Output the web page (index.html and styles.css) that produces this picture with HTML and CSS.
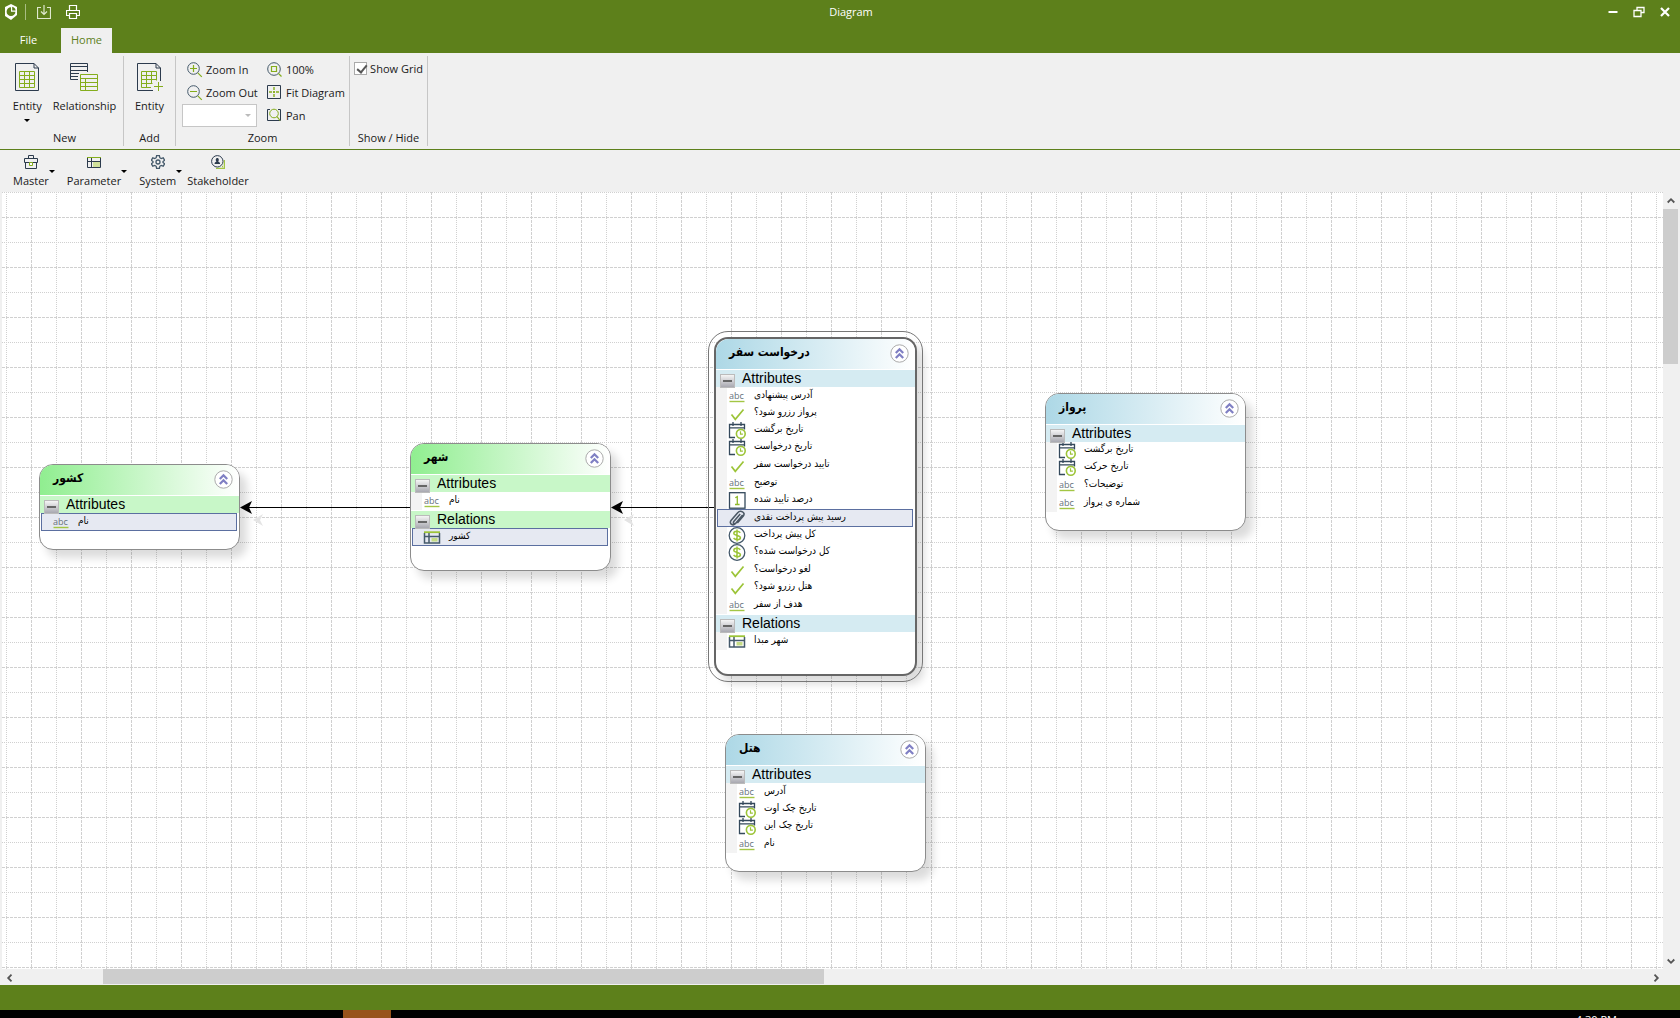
FILE: index.html
```html
<!DOCTYPE html>
<html lang="en">
<head>
  <meta charset="UTF-8">
  <meta name="viewport" content="width=device-width, initial-scale=1.0">
  <title>Diagram</title>
  <link rel="stylesheet" href="styles.css">
</head>
<body>
  <!-- Shared icons -->
  <svg class="sprite" aria-hidden="true">
    <symbol id="collapse" viewBox="0 0 19 19">
      <circle cx="9.5" cy="9.5" r="8.7" fill="#fff" stroke="#aaa" stroke-width="1"/>
      <path d="M5.8 9L9.5 5.3L13.2 9M5.8 14L9.5 10.3L13.2 14" fill="none" stroke="#8080c4" stroke-width="2.3"/>
    </symbol>
    <symbol id="text" viewBox="0 0 18 17">
      <text x="1" y="11" font-family="Open Sans, sans-serif" font-size="9" fill="#66727c">abc</text>
      <path d="M1.5 13.500h15" stroke="#a3c644" stroke-width="1.4"/>
    </symbol>
    <symbol id="check" viewBox="0 0 18 17">
      <path d="M3.5 9.5l3.8 4.8L15.5 4.5" fill="none" stroke="#9cc438" stroke-width="1.7"/>
    </symbol>
    <symbol id="date" viewBox="0 0 18 17">
      <path d="M7 15.5H1.5V2.5h15v5M1.5 5.8h15M5 0v4M13 0v4" fill="none" stroke="#34495b" stroke-width="1.3"/>
      <circle cx="12.8" cy="11.8" r="4.4" fill="#fff" stroke="#9cc438" stroke-width="1.6"/>
      <path d="M12.5 9.3v2.8h2.4" fill="none" stroke="#9cc438" stroke-width="1.2"/>
    </symbol>
    <symbol id="number" viewBox="0 0 18 17">
      <rect x="1.5" y=".7" width="15.5" height="15.5" fill="#fff" stroke="#34495b" stroke-width="1.3"/>
      <path d="M7.3 5.8l2-1.2v7.6M7 12.5h4.6" fill="none" stroke="#8fb82c" stroke-width="1.3"/>
    </symbol>
    <symbol id="file" viewBox="0 0 18 17">
      <path d="M14.7 5L8 13c-3 3.8-7.5.5-4.8-2.8l6.5-7.5c2.6-3 8.4-.4 5.6 3.3l-6 7M12.2 4L5.8 11.5c-1.3 2 1 3 2.2 1.5l6-7.3" fill="none" stroke="#4b5865" stroke-width="1.6"/>
    </symbol>
    <symbol id="money" viewBox="0 0 18 17">
      <circle cx="9" cy="8.5" r="7.8" fill="#fff" stroke="#44596a" stroke-width="1.3"/>
      <path d="M12.3 5.7C10.5 3.5 5.8 3.8 5.8 6.3c0 2.8 6.6 1.4 6.6 4.4 0 2.5-5 2.6-6.8.3M9 2.5v12" fill="none" stroke="#9cc438" stroke-width="1.5"/>
    </symbol>
    <symbol id="relation" viewBox="0 0 18 17">
      <path d="M1.5 4v10h15V4M1.5 7.5h15M6 4v10" fill="none" stroke="#44596a" stroke-width="1.5"/>
      <path d="M1 3.2h16" stroke="#9cc438" stroke-width="1.8"/>
      <path d="M8.5 9h6v3.5h-6z" fill="#c5dc85"/>
    </symbol>
  </svg>

  <header class="titlebar">
    <div class="quick">
      <svg width="14" height="16" viewBox="0 0 14 16" aria-hidden="true">
        <path d="M7 0l6 3v8l-6 5-6-4V3z" fill="#fff"/>
        <path d="M7 3.3a4.4 4.4 0 1 0 4.4 4.4H7z" fill="#5d801b"/>
        <path d="M8.2 2.8v3.8h3.4C11.4 4.5 10 3 8.2 2.8z" fill="#5d801b"/>
      </svg>
      <span class="divider"></span>
      <button aria-label="Save">
        <svg width="14" height="14" viewBox="0 0 14 14"><path d="M4 2.5H.5v11h13v-11H10M7 0v9M4 6.500l3 3 3-3" fill="none" stroke="#dfe8cf" stroke-width="1.2"/></svg>
      </button>
      <button aria-label="Print">
        <svg width="14" height="14" viewBox="0 0 14 14"><path d="M3.500 5V.5h7V5M3.500 10.500h-3V5.500h13v5h-3M3.500 8.500h7v5h-7z" fill="none" stroke="#fff" stroke-width="1.2"/></svg>
      </button>
    </div>
    <h1>Diagram</h1>
    <div class="window-buttons">
      <button aria-label="Minimize"><svg width="12" height="12" viewBox="0 0 12 12"><path d="M1.500 6h9" stroke="#fff" stroke-width="2"/></svg></button>
      <button aria-label="Restore"><svg width="12" height="12" viewBox="0 0 12 12"><path d="M1 4.500h7v6H1zM4 4V1.500h7v5H8.500" fill="none" stroke="#fff" stroke-width="1.300"/></svg></button>
      <button aria-label="Close"><svg width="12" height="12" viewBox="0 0 12 12"><path d="M2 2l8 8M10 2l-8 8" stroke="#fff" stroke-width="2.200"/></svg></button>
    </div>
  </header>

  <nav class="tabs">
    <a href="#file">File</a>
    <a href="#home" class="active">Home</a>
  </nav>

  <section class="ribbon">
    <div class="group new-group">
      <div class="group-body">
        <button class="large">
          <svg width="24" height="28" viewBox="0 0 24 28">
            <path d="M.5.5h18.500l4.500 4.500v22.500H.5zM19 .5v4.500h4.500" fill="none" stroke="#2c3b4d"/>
            <path d="M4.500 8.500h15v16h-15zM4.500 12.500h15M4.500 16.500h15M4.500 20.500h15M9.500 8.500v16M14.500 8.500v16" fill="none" stroke="#84ad1c"/>
          </svg>
          <span>Entity</span>
          <i class="caret"></i>
        </button>
        <button class="large">
          <svg width="28" height="28" viewBox="0 0 28 28">
            <path d="M8 16.500H.5V.5h17V9M.5 3.500h17M.5 7.500h17M.5 10.500H9M.5 13.500H8" fill="none" stroke="#2c3b4d"/>
            <path d="M10.500 11.500h17v16h-17zM10.500 15.500h17M10.500 19.500h17M10.500 23.500h17M15.500 15.500v12" fill="none" stroke="#84ad1c"/>
          </svg>
          <span>Relationship</span>
        </button>
      </div>
      <div class="group-title">New</div>
    </div>
    <div class="group add-group">
      <div class="group-body">
        <button class="large">
          <svg width="26" height="28" viewBox="0 0 26 28">
            <path d="M16 27.500H.5V.5h18.500l4.500 4.500v13M19 .5v4.500h4.500" fill="none" stroke="#2c3b4d"/>
            <path d="M14 24.500H4.500v-16h15v9M4.500 12.500h15M4.500 16.500h15M4.500 20.500h11M9.500 8.500v16M14.500 8.500v12M21.500 19v9M17 23.500h9" fill="none" stroke="#84ad1c"/>
          </svg>
          <span>Entity</span>
        </button>
      </div>
      <div class="group-title">Add</div>
    </div>
    <div class="group zoom-group">
      <div class="group-body">
        <div class="stack">
          <button class="small">
            <svg width="16" height="16" viewBox="0 0 16 16"><circle cx="6.500" cy="6.500" r="5.800" fill="none" stroke="#44596a"/><path d="M3 6.500h7M6.500 3v7M10.800 10.800l4 4" stroke="#84ad1c" stroke-width="1.200"/></svg>
            Zoom In
          </button>
          <button class="small">
            <svg width="16" height="16" viewBox="0 0 16 16"><circle cx="6.500" cy="6.500" r="5.800" fill="none" stroke="#44596a"/><path d="M3 6.500h7M10.800 10.800l4 4" stroke="#84ad1c" stroke-width="1.200"/></svg>
            Zoom Out
          </button>
          <div class="combo">
            <select aria-label="Zoom level"><option></option></select>
            <i class="caret"></i>
          </div>
        </div>
        <div class="stack">
          <button class="small">
            <svg width="16" height="16" viewBox="0 0 16 16"><circle cx="7" cy="7" r="6.300" fill="none" stroke="#44596a"/><path d="M4.500 4.500h5v5h-5zM11.500 11.500l3 3" fill="none" stroke="#84ad1c" stroke-width="1.200"/></svg>
            100%
          </button>
          <button class="small">
            <svg width="16" height="16" viewBox="0 0 16 16"><path d="M.5.500h13v13H.5z" fill="none" stroke="#2c3b4d"/><path d="M7 2v3M7 6v2M7 9v3M2 7h3M6 7h2M9 7h3" stroke="#84ad1c" stroke-width="1.400"/></svg>
            Fit Diagram
          </button>
          <button class="small">
            <svg width="16" height="16" viewBox="0 0 16 16"><path d="M3 1.500H.5v11h13v-11H11" fill="none" stroke="#2c3b4d"/><circle cx="7" cy="5.500" r="4.300" fill="none" stroke="#84ad1c"/><path d="M10 8.500l3 4" stroke="#84ad1c" stroke-width="1.200"/></svg>
            Pan
          </button>
        </div>
      </div>
      <div class="group-title">Zoom</div>
    </div>
    <div class="group show-group">
      <div class="group-body">
        <label class="check"><input type="checkbox" checked>Show Grid</label>
      </div>
      <div class="group-title">Show / Hide</div>
    </div>
  </section>

  <section class="toolbar">
    <div class="menus">
      <button>
        <span>
          <svg width="14" height="14" viewBox="0 0 14 14"><path d="M.5 3.500h13v4H.5zM1.500 7.500v6h11v-6M4.500 3V.5h5V3" fill="none" stroke="#2c3b4d"/><path d="M5.500 7.500h3v3h-3z" fill="#fff" stroke="#84ad1c"/></svg>
          Master
        </span>
        <i class="caret"></i>
      </button>
      <button>
        <span>
          <svg width="14" height="14" viewBox="0 0 14 14"><path d="M.5 3v9.500h13V3M.5 6.500h13M4.500 3v9.500" fill="none" stroke="#2c3b4d"/><path d="M0 2.500h14M6.500 9.500h6" stroke="#84ad1c"/><path d="M6 7h7v5H6z" fill="#cfe09a"/></svg>
          Parameter
        </span>
        <i class="caret"></i>
      </button>
      <button>
        <span>
          <svg width="14" height="14" viewBox="0 0 14 14"><path d="M5.600.7h2.800l.4 2 1.400.8 2-.7 1.400 2.400L12 6.500v1l1.600 1.300-1.400 2.400-2-.7-1.400.8-.4 2H5.600l-.4-2-1.400-.8-2 .7L.4 8.800 2 7.500v-1L.4 5.200l1.400-2.400 2 .7 1.400-.8z" fill="none" stroke="#44596a" stroke-width="1.300"/><circle cx="7" cy="7" r="2" fill="none" stroke="#44596a" stroke-width="1.300"/></svg>
          System
        </span>
        <i class="caret"></i>
      </button>
    </div>
    <button>
      <span>
        <svg width="14" height="14" viewBox="0 0 14 14"><path d="M5 13.500h8.500V5M11 11.500h1" fill="none" stroke="#a3c644" stroke-width="1.500"/><circle cx="6.300" cy="6.300" r="5.700" fill="#f0f0f0" stroke="#2c3b4d"/><path d="M3.500 9c0-2 1.500-2 2-2.500C4 5 5 3 6.300 3s2.300 2 .8 3.500c.5.500 2 .5 2 2.500z" fill="#2c3b4d"/></svg>
        Stakeholder
      </span>
    </button>
  </section>

  <main class="workspace">
    <div class="canvas">
      <svg class="grid" width="100%" height="100%" aria-hidden="true">
        <defs>
          <pattern id="grid-lines" x="4" width="100" height="100" patternUnits="userSpaceOnUse">
            <g fill="none" stroke="#d0d0d0">
              <path d="M0 .5h100M0 50.500h100M.5 0v100M50.500 0v100" stroke-dasharray="1 1"/>
              <path d="M0 25.500h100M0 75.500h100M25.500 0v100M75.500 0v100" stroke-dasharray="3 1"/>
            </g>
          </pattern>
        </defs>
        <rect width="100%" height="100%" fill="url(#grid-lines)"/>
        <!-- Relationship connectors -->
        <g fill="#e4e4e4">
          <path d="M251 328l10-6-3 6 3 6zM622 328l10-6-3 6 3 6z"/>
        </g>
        <path d="M240 315.500h168M611 315.500h102" stroke="#000"/>
        <path d="M238 315.500l12-6.500-3 6.500 3 6.500zM609 315.500l12-6.500-3 6.500 3 6.500z"/>
      </svg>

      <article class="entity green country">
        <header><h2 dir="auto">کشور</h2><button aria-label="Collapse"><svg><use href="#collapse"/></svg></button></header>
        <h3><button aria-label="Toggle"></button>Attributes</h3>
        <ul>
          <li class="selected"><svg><use href="#text"/></svg><span dir="auto">نام</span></li>
        </ul>
      </article>

      <article class="entity green city">
        <header><h2 dir="auto">شهر</h2><button aria-label="Collapse"><svg><use href="#collapse"/></svg></button></header>
        <h3><button aria-label="Toggle"></button>Attributes</h3>
        <ul>
          <li><svg><use href="#text"/></svg><span dir="auto">نام</span></li>
        </ul>
        <h3><button aria-label="Toggle"></button>Relations</h3>
        <ul class="relations">
          <li class="selected"><svg><use href="#relation"/></svg><span dir="auto">کشور</span></li>
        </ul>
      </article>

      <article class="entity blue active request">
        <header><h2 dir="auto">درخواست سفر</h2><button aria-label="Collapse"><svg><use href="#collapse"/></svg></button></header>
        <h3><button aria-label="Toggle"></button>Attributes</h3>
        <ul>
          <li><svg><use href="#text"/></svg><span dir="auto">آدرس پیشنهادی</span></li>
          <li class="compact"><svg><use href="#check"/></svg><span dir="auto">پرواز رزرو شود؟</span></li>
          <li class="compact"><svg><use href="#date"/></svg><span dir="auto">تاریخ برگشت</span></li>
          <li class="compact"><svg><use href="#date"/></svg><span dir="auto">تاریخ درخواست</span></li>
          <li><svg><use href="#check"/></svg><span dir="auto">تایید درخواست سفر</span></li>
          <li><svg><use href="#text"/></svg><span dir="auto">توضیح</span></li>
          <li class="compact"><svg><use href="#number"/></svg><span dir="auto">درصد تایید شده</span></li>
          <li class="selected"><svg><use href="#file"/></svg><span dir="auto">رسید پیش پرداخت نقدی</span></li>
          <li class="compact"><svg><use href="#money"/></svg><span dir="auto">کل پیش پرداخت</span></li>
          <li class="compact"><svg><use href="#money"/></svg><span dir="auto">کل درخواست شده؟</span></li>
          <li><svg><use href="#check"/></svg><span dir="auto">لغو درخواست؟</span></li>
          <li class="compact"><svg><use href="#check"/></svg><span dir="auto">هتل رزرو شود؟</span></li>
          <li><svg><use href="#text"/></svg><span dir="auto">هدف از سفر</span></li>
        </ul>
        <h3><button aria-label="Toggle"></button>Relations</h3>
        <ul class="relations">
          <li><svg><use href="#relation"/></svg><span dir="auto">شهر مبدا</span></li>
        </ul>
      </article>

      <article class="entity blue flight">
        <header><h2 dir="auto">پرواز</h2><button aria-label="Collapse"><svg><use href="#collapse"/></svg></button></header>
        <h3><button aria-label="Toggle"></button>Attributes</h3>
        <ul>
          <li class="compact"><svg><use href="#date"/></svg><span dir="auto">تاریخ برگشت</span></li>
          <li class="compact"><svg><use href="#date"/></svg><span dir="auto">تاریخ حرکت</span></li>
          <li><svg><use href="#text"/></svg><span dir="auto">توضیحات؟</span></li>
          <li><svg><use href="#text"/></svg><span dir="auto">شماره ی پرواز</span></li>
        </ul>
      </article>

      <article class="entity blue hotel">
        <header><h2 dir="auto">هتل</h2><button aria-label="Collapse"><svg><use href="#collapse"/></svg></button></header>
        <h3><button aria-label="Toggle"></button>Attributes</h3>
        <ul>
          <li><svg><use href="#text"/></svg><span dir="auto">آدرس</span></li>
          <li class="compact"><svg><use href="#date"/></svg><span dir="auto">تاریخ چک اوت</span></li>
          <li class="compact"><svg><use href="#date"/></svg><span dir="auto">تاریخ چک این</span></li>
          <li><svg><use href="#text"/></svg><span dir="auto">نام</span></li>
        </ul>
      </article>
    </div>

    <div class="scroll vertical">
      <button aria-label="Scroll up"><svg width="8" height="8" viewBox="0 0 8 8"><path d="M.7 5.500L4 2.200l3.300 3.300" fill="none" stroke="#555" stroke-width="1.800"/></svg></button>
      <div class="thumb"></div>
      <button class="end" aria-label="Scroll down"><svg width="8" height="8" viewBox="0 0 8 8"><path d="M.7 2.500L4 5.800l3.300-3.300" fill="none" stroke="#555" stroke-width="1.800"/></svg></button>
    </div>
    <div class="scroll horizontal">
      <button aria-label="Scroll left"><svg width="8" height="8" viewBox="0 0 8 8"><path d="M5.500.7L2.200 4l3.300 3.300" fill="none" stroke="#555" stroke-width="1.800"/></svg></button>
      <div class="thumb"></div>
      <button class="end" aria-label="Scroll right"><svg width="8" height="8" viewBox="0 0 8 8"><path d="M2.500.7L5.800 4 2.500 7.300" fill="none" stroke="#555" stroke-width="1.800"/></svg></button>
    </div>
  </main>

  <footer class="statusbar"></footer>
  <div class="taskbar">
    <span class="task"></span>
    <time>4:30 PM</time>
  </div>
</body>
</html>
```
FILE: styles.css
```css
* {
  box-sizing: border-box;
}

body {
  display: flex;
  flex-direction: column;
  height: 100vh;
  margin: 0;
  overflow: hidden;
  font-family: "Open Sans", "Noto Sans", sans-serif;
  font-size: 11px;
  line-height: 16px;
  color: #1a1a1a;
  background: #f0f0f0;
}

button {
  margin: 0;
  padding: 0;
  border: 0;
  background: none;
  font: inherit;
  color: inherit;
}

h1, h2, h3, ul {
  margin: 0;
  padding: 0;
}

svg {
  display: block;
  flex: none;
}

.sprite {
  display: none;
}

.caret {
  width: 0;
  border: 3px solid transparent;
  border-top-color: #000;
  border-bottom: 0;
}

/* Title bar */
.titlebar {
  display: flex;
  align-items: center;
  height: 23px;
  padding: 0 9px 0 4px;
  color: #fff;
  background: #5d801b;
}

.titlebar h1 {
  flex: 1;
  font-size: 11px;
  font-weight: normal;
  text-align: center;
}

.quick {
  display: flex;
  align-items: center;
}

.quick .divider {
  width: 1px;
  height: 16px;
  margin: 0 11px 0 7px;
  background: #a9bd83;
}

.quick button {
  margin-right: 15px;
}

.window-buttons {
  display: flex;
  justify-content: flex-end;
  gap: 14px;
}

.tabs {
  display: flex;
  gap: 4px;
  height: 30px;
  padding: 5px 0 0 0;
  background: #5d801b;
}

.tabs a {
  width: 57px;
  line-height: 24px;
  text-align: center;
  color: #fff;
  text-decoration: none;
}

.tabs .active {
  width: 51px;
  color: #5d801b;
  background: #f0f0f0;
}

/* Ribbon */
.ribbon {
  display: flex;
  height: 97px;
  padding-top: 3px;
  border-bottom: 1px solid #5d801b;
}

.group {
  display: flex;
  flex-direction: column;
  height: 90px;
  border-right: 1px solid #c6c6c6;
}

.group-body {
  display: flex;
  flex: 1;
  justify-content: center;
}

.group-title {
  height: 16px;
  text-align: center;
}

.new-group {
  width: 124px;
  padding-left: 6px;
}

.add-group {
  width: 52px;
}

.zoom-group {
  width: 174px;
}

.show-group {
  width: 78px;
}

.large {
  display: flex;
  flex-direction: column;
  align-items: center;
  padding-top: 7px;
}

.large span {
  margin: 7px 0 5px;
}

.new-group .group-body {
  gap: 11px;
}

.zoom-group .group-body {
  justify-content: flex-start;
  gap: 10px;
  padding: 2px 0 0 6px;
}

.stack {
  display: flex;
  flex-direction: column;
}

.small {
  display: flex;
  align-items: center;
  gap: 3px;
  height: 23px;
  white-space: nowrap;
}

.stack:first-child {
  width: 75px;
}

.stack:first-child .small {
  padding-left: 5px;
}

.combo {
  display: grid;
  align-items: center;
}

.combo > * {
  grid-area: 1 / 1;
}

.combo select {
  height: 23px;
  appearance: none;
  border: 1px solid #c6c6c6;
  border-radius: 0;
  background: #fff;
}

.combo .caret {
  justify-self: end;
  margin-right: 6px;
  border-top-color: #bbb;
  pointer-events: none;
}

.check {
  display: flex;
  align-items: center;
  gap: 3px;
  height: 25px;
  white-space: nowrap;
}

.check input {
  width: 13px;
  height: 13px;
  margin: 0;
  appearance: none;
  border: 1px solid #aaa;
  background: #fff;
}

.check input:checked::before {
  content: "";
  display: block;
  width: 4px;
  height: 8px;
  margin: 0 0 0 4px;
  border: solid #555;
  border-width: 0 2px 2px 0;
  transform: rotate(40deg);
}

/* Diagram toolbar */
.toolbar {
  display: flex;
  gap: 5px;
  height: 42px;
  padding: 5px 0 0 13px;
}

.toolbar .menus {
  display: flex;
  gap: 12px;
}

.toolbar button {
  display: flex;
  align-items: flex-start;
}

.toolbar span {
  display: flex;
  flex-direction: column;
  align-items: center;
  gap: 4px;
}

.toolbar .caret {
  margin-top: 15px;
}

/* Canvas and scroll bars */
.workspace {
  display: grid;
  grid-template-columns: 1fr 17px;
  grid-template-rows: 1fr 16px;
  flex: 1;
  min-height: 0;
  padding-left: 2px;
}

.canvas {
  position: relative;
  overflow: hidden;
  background: #fff;
}

.scroll {
  display: flex;
  background: #f0f0f0;
}

.scroll button {
  display: grid;
  place-items: center;
  width: 15px;
  height: 17px;
}

.scroll .end {
  margin: auto 0 0 auto;
}

.vertical .end {
  margin-left: 0;
}

.scroll .thumb {
  background: #cdcdcd;
}

.vertical {
  flex-direction: column;
}

.vertical .thumb {
  width: 15px;
  height: 20%;
}

.horizontal .thumb {
  width: 43.4%;
  height: 15px;
  margin-left: 5.2%;
}

.statusbar {
  height: 25px;
  background: #5d801b;
}

.taskbar {
  display: flex;
  justify-content: space-between;
  height: 8px;
  padding: 0 63px 0 343px;
  overflow: hidden;
  color: #fff;
  background: #000;
}

.taskbar .task {
  width: 48px;
  background: #98531b;
}

.taskbar time {
  padding-top: 2px;
}

/* Entities */
.entity {
  position: absolute;
  width: 201px;
  padding-bottom: 18px;
  border: 1px solid #8c8c8c;
  border-radius: 14px;
  background: #fff;
  box-shadow: 7px 8px 8px rgba(0, 0, 0, 0.14);
}

.green {
  --head: #90ee90;
  --band: #c8f7c8;
}

.blue {
  --head: #add8e6;
  --band: #d5ebf2;
}

.country {
  left: 37px;
  top: 272px;
}

.city {
  left: 408px;
  top: 251px;
}

.request {
  left: 712px;
  top: 145px;
}

.flight {
  left: 1043px;
  top: 201px;
}

.hotel {
  left: 723px;
  top: 542px;
}

.entity.active {
  width: 203px;
  border: 2px solid #666;
  outline: 1px solid #777;
  outline-offset: 5px;
}

.entity header {
  display: flex;
  justify-content: space-between;
  height: 30px;
  padding: 5px 6px 0 13px;
  border-radius: 13px 13px 0 0;
  background: linear-gradient(to right, var(--head), #fff);
}

.entity h2 {
  font-family: "DejaVu Sans Condensed", "DejaVu Sans", sans-serif;
  font-size: 12px;
  line-height: 16px;
  color: #000;
}

.entity header svg {
  width: 19px;
  height: 19px;
}

.entity header button {
  height: 19px;
}

.entity h3 {
  display: flex;
  gap: 7px;
  height: 18px;
  padding-left: 4px;
  border-top: 1px solid #fff;
  font: 14px/16px "Liberation Sans", Arial, sans-serif;
  color: #000;
  background: var(--band);
}

.entity h3 button {
  z-index: 1;
  width: 15px;
  height: 14px;
  margin-top: 4px;
  border: 1px solid #bbb;
  background: linear-gradient(#666, #666) no-repeat center / 9px 2px, linear-gradient(#f5f5f5, #a8a8b0);
}

.entity ul {
  list-style: none;
}

.entity .relations {
  padding-bottom: 6px;
}

.entity li {
  display: flex;
  align-items: center;
  gap: 8px;
  height: 18px;
  padding-left: 12px;
  background: linear-gradient(#f3f3f3, #f3f3f3) no-repeat left / 11px 100%;
}

.entity li.compact {
  height: 17px;
}

.entity li.selected {
  margin: 0 2px 0 1px;
  padding-left: 10px;
  border: 1px solid #5b6fa0;
  background: #e6e9f2;
}

.entity li svg {
  width: 18px;
  height: 17px;
}

.entity li span {
  padding-bottom: 4px;
  font-family: "DejaVu Sans Condensed", "DejaVu Sans", sans-serif;
  font-size: 10px;
  line-height: 13px;
  color: #000;
}
```
